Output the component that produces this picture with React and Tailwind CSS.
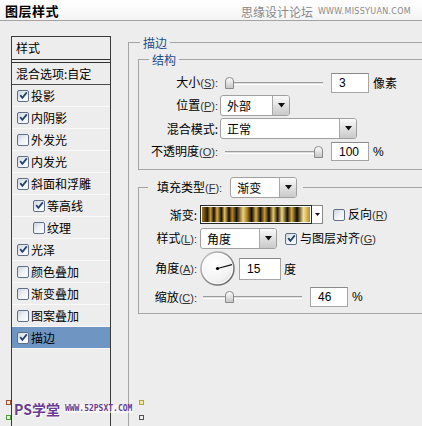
import React from 'react'

const layers = [
  { label: '投影', on: true },
  { label: '内阴影', on: true },
  { label: '外发光', on: false },
  { label: '内发光', on: true },
  { label: '斜面和浮雕', on: true },
  { label: '等高线', on: true, sub: true },
  { label: '纹理', on: false, sub: true },
  { label: '光泽', on: true },
  { label: '颜色叠加', on: false },
  { label: '渐变叠加', on: false },
  { label: '图案叠加', on: false },
  { label: '描边', on: true, active: true },
]

function Check({ on }) {
  return (
    <span className="w-[12px] h-[12px] shrink-0 rounded-[2px] border border-[#5d7088] bg-gradient-to-br from-[#cfd6e0] via-[#eef1f5] to-white flex items-center justify-center">
      {on && (
        <svg width="9" height="9" viewBox="0 0 9 9">
          <path d="M1.2 4.2 L3.4 6.8 L7.8 1.4" stroke="#23436f" strokeWidth="1.8" fill="none" />
        </svg>
      )}
    </span>
  )
}

function Key({ k, colon }) {
  return (
    <span className="font-['Liberation_Sans',sans-serif] text-[11px] text-[#333]">
      (<span className="underline">{k}</span>){colon ? ':' : ''}
    </span>
  )
}

function Label({ text, k, w }) {
  return (
    <span className={`${w} shrink-0 text-right whitespace-nowrap`}>
      {text}
      {k ? <Key k={k} colon /> : ':'}
    </span>
  )
}

function Arrow() {
  return (
    <svg width="7" height="5" viewBox="0 0 7 5">
      <path d="M0 0 H7 L3.5 4.5 Z" fill="#111" />
    </svg>
  )
}

function Select({ value, w }) {
  return (
    <div className={`${w} h-[21px] flex bg-white border border-[#a0a0a0] rounded-[3px] overflow-hidden`}>
      <span className="flex-1 flex items-center pl-[6px]">{value}</span>
      <span className="w-[17px] border-l border-[#a8a8a8] bg-gradient-to-b from-[#fafafa] to-[#c9c9c9] flex items-center justify-center">
        <Arrow />
      </span>
    </div>
  )
}

function Field({ value, w, h }) {
  return (
    <div className={`${w} ${h} bg-white border border-[#a5a5a5] border-t-[#8a8a8a] flex items-center pl-[7px] font-['Liberation_Sans',sans-serif] text-[12px]`}>
      {value}
    </div>
  )
}

function Slider({ w, thumb }) {
  return (
    <div className={`${w} h-[12px] relative shrink-0`}>
      <div className="absolute left-0 right-0 top-[5px] h-[3px] border-t border-[#9c9c9c] border-b border-b-white bg-[#dedede]" />
      <svg className={`absolute top-0 ${thumb}`} width="9" height="12" viewBox="0 0 9 12">
        <defs>
          <linearGradient id="th" x1="0" y1="0" x2="0" y2="1">
            <stop offset="0" stopColor="#ffffff" />
            <stop offset="1" stopColor="#c4c4c4" />
          </linearGradient>
        </defs>
        <path d="M0.5 4 Q0.5 0.5 4.5 0.5 Q8.5 0.5 8.5 4 V11.5 H0.5 Z" fill="url(#th)" stroke="#8a8a8a" />
      </svg>
    </div>
  )
}

function Dial() {
  return (
    <svg width="35" height="35" viewBox="0 0 35 35">
      <defs>
        <radialGradient id="dg" cx="0.4" cy="0.35" r="0.7">
          <stop offset="0" stopColor="#ffffff" />
          <stop offset="0.75" stopColor="#f2f2f2" />
          <stop offset="1" stopColor="#d4d4d4" />
        </radialGradient>
        <linearGradient id="dr" x1="0" y1="0" x2="1" y2="1">
          <stop offset="0" stopColor="#c8c8c8" />
          <stop offset="1" stopColor="#5c5c5c" />
        </linearGradient>
      </defs>
      <circle cx="17.5" cy="17.5" r="16.5" fill="url(#dg)" stroke="url(#dr)" strokeWidth="1.5" />
      <circle cx="17.5" cy="17.5" r="15" fill="none" stroke="#ffffff" strokeWidth="1" />
      <line x1="17.5" y1="17.5" x2="32" y2="13.6" stroke="#111" strokeWidth="1.2" />
      <circle cx="17.5" cy="17.5" r="1.6" fill="#000" />
    </svg>
  )
}

export default function App() {
  return (
    <div className="w-[422px] h-[426px] overflow-hidden relative bg-[#ededed] text-black text-[12px] leading-none font-['Noto_Sans_CJK_SC','Noto_Sans',sans-serif]">
      {/* title bar */}
      <header className="h-[21px] flex items-center justify-between border-b border-[#a2a2a2] bg-gradient-to-b from-white to-[#f4f4f4] pl-[5px] pr-[11px]">
        <span className="font-bold text-[13px] tracking-[0.5px]">图层样式</span>
        <span className="flex items-center gap-[5px] text-[#8a8a8a] pt-[3px]">
          <span className="text-[12px]">思缘设计论坛</span>
          <span className="text-[8px] font-['DejaVu_Sans',sans-serif] tracking-[0.3px]">WWW.MISSYUAN.COM</span>
        </span>
      </header>

      <div className="flex">
        {/* styles list */}
        <div className="ml-[11px] mt-[15px] w-[100px] h-[400px] shrink-0 border border-[#3a3a3a] flex flex-col">
          <div className="h-[26px] border-b-4 border-double border-[#333] flex items-center pl-[4px]">样式</div>
          <div className="h-[22px] border-b border-[#4a4a4a] flex items-center pl-[4px] whitespace-nowrap">混合选项:自定</div>
          {layers.map((l) => (
            <div
              key={l.label}
              className={`h-[22px] shrink-0 flex items-center gap-[2px] border-b border-[#f9f9f9] ${l.sub ? 'pl-[21px]' : 'pl-[5px]'} ${l.active ? 'bg-[#6f96c3]' : ''}`}
            >
              <Check on={l.on} />
              <span className="whitespace-nowrap">{l.label}</span>
            </div>
          ))}
        </div>

        {/* stroke settings */}
        <fieldset className="ml-[17px] mt-[13px] w-[300px] h-[420px] border border-[#a4a4a4] p-0 m-0 shrink-0">
          <legend className="ml-[11px] px-[3px] leading-[17px] text-[#1d4e8c]">描边</legend>
          <div className="pl-[9px]">
            <fieldset className="w-[290px] border border-[#a4a4a4] p-0 m-0">
              <legend className="ml-[10px] px-[3px] leading-[17px] text-[#1d4e8c]">结构</legend>
              <div className="pt-[3px] pb-[6px] flex flex-col">
                <div className="h-[23px] flex items-center">
                  <Label text="大小" k="S" w="w-[79px]" />
                  <div className="ml-[7px]"><Slider w="w-[98px]" thumb="left-0" /></div>
                  <div className="ml-[8px]"><Field value="3" w="w-[38px]" h="h-[20px]" /></div>
                  <span className="ml-[4px]">像素</span>
                </div>
                <div className="h-[23px] flex items-center">
                  <Label text="位置" k="P" w="w-[79px]" />
                  <div className="ml-[2px]"><Select value="外部" w="w-[70px]" /></div>
                </div>
                <div className="h-[23px] flex items-center">
                  <Label text="混合模式" w="w-[79px]" />
                  <div className="ml-[2px]"><Select value="正常" w="w-[137px]" /></div>
                </div>
                <div className="h-[23px] flex items-center">
                  <Label text="不透明度" k="O" w="w-[79px]" />
                  <div className="ml-[7px]"><Slider w="w-[98px]" thumb="right-0" /></div>
                  <div className="ml-[8px]"><Field value="100" w="w-[38px]" h="h-[19px]" /></div>
                  <span className="ml-[4px] font-['Liberation_Sans',sans-serif]">%</span>
                </div>
              </div>
            </fieldset>

            <fieldset className="mt-[7px] w-[290px] border border-[#a4a4a4] p-0 m-0">
              <legend className="ml-[9px] pl-[9px] pr-[6px] h-[21px] flex items-center">
                <Label text="填充类型" k="F" w="w-auto" />
                <div className="ml-[8px]"><Select value="渐变" w="w-[67px]" /></div>
              </legend>
              <div className="pt-[5px] pb-[5px] flex flex-col">
                <div className="h-[23px] flex items-center">
                  <Label text="渐变" w="w-[58px]" />
                  <div className="ml-[3px] flex">
                    <div className="w-[112px] h-[19px] border border-[#2a2a2a] p-[1px] bg-white">
                      <div className="w-full h-full bg-[linear-gradient(90deg,#9c7a22_0%,#2a1a04_5%,#c89b36_8%,#120a00_11%,#d8ae45_14%,#1a1003_18%,#e6c25c_21%,#150c01_25%,#b7892b_28%,#1b1103_32%,#f0d27a_38%,#a27a22_42%,#120a00_46%,#d9b04a_50%,#1a1002_54%,#c59a38_58%,#0f0800_62%,#e8c865_66%,#241706_70%,#f3da86_74%,#171002_79%,#d4aa45_83%,#120a00_88%,#f5e090_94%,#b58a2c_100%)]" />
                    </div>
                    <div className="w-[11px] h-[19px] border border-l-0 border-[#8a8a8a] bg-white flex items-center justify-center">
                      <svg width="5" height="3" viewBox="0 0 5 3"><path d="M0 0 H5 L2.5 3 Z" fill="#111" /></svg>
                    </div>
                  </div>
                  <div className="ml-[10px]"><Check on={false} /></div>
                  <span className="ml-[3px] whitespace-nowrap">反向<Key k="R" /></span>
                </div>
                <div className="h-[25px] flex items-center">
                  <Label text="样式" k="L" w="w-[58px]" />
                  <div className="ml-[3px]"><Select value="角度" w="w-[77px]" /></div>
                  <div className="ml-[8px]"><Check on /></div>
                  <span className="ml-[3px] whitespace-nowrap">与图层对齐<Key k="G" /></span>
                </div>
                <div className="h-[35px] flex items-center">
                  <Label text="角度" k="A" w="w-[58px]" />
                  <div className="ml-[3px]"><Dial /></div>
                  <div className="ml-[4px]"><Field value="15" w="w-[42px]" h="h-[22px]" /></div>
                  <span className="ml-[3px]">度</span>
                </div>
                <div className="h-[22px] flex items-center">
                  <Label text="缩放" k="C" w="w-[58px]" />
                  <div className="ml-[6px]"><Slider w="w-[99px]" thumb="left-[22px]" /></div>
                  <div className="ml-[8px]"><Field value="46" w="w-[38px]" h="h-[20px]" /></div>
                  <span className="ml-[4px] font-['Liberation_Sans',sans-serif]">%</span>
                </div>
              </div>
            </fieldset>
          </div>
        </fieldset>
      </div>

      {/* site watermark */}
      <div className="absolute left-[14px] top-[402px] flex items-center gap-[4px]">
        <span className="text-[14px] font-bold text-[#6a3b92] [text-shadow:0_0_1px_#fff,1px_1px_0_#fff]">PS学堂</span>
        <span className="text-[8px] font-bold font-['DejaVu_Sans_Mono',monospace] text-[#6a3b92] bg-white/60 px-[1px]">WWW.52PSXT.COM</span>
      </div>
      <span className="absolute left-[6px] top-[400px] w-[5px] h-[5px] border border-[#a0522d]" />
      <span className="absolute left-[6px] top-[415px] w-[5px] h-[5px] border border-[#4f9a3a]" />
      <span className="absolute left-[139px] top-[400px] w-[5px] h-[5px] border border-[#b5a33a] bg-[#f2ea9a]" />
      <span className="absolute left-[139px] top-[415px] w-[5px] h-[5px] border border-[#555]" />
    </div>
  )
}
